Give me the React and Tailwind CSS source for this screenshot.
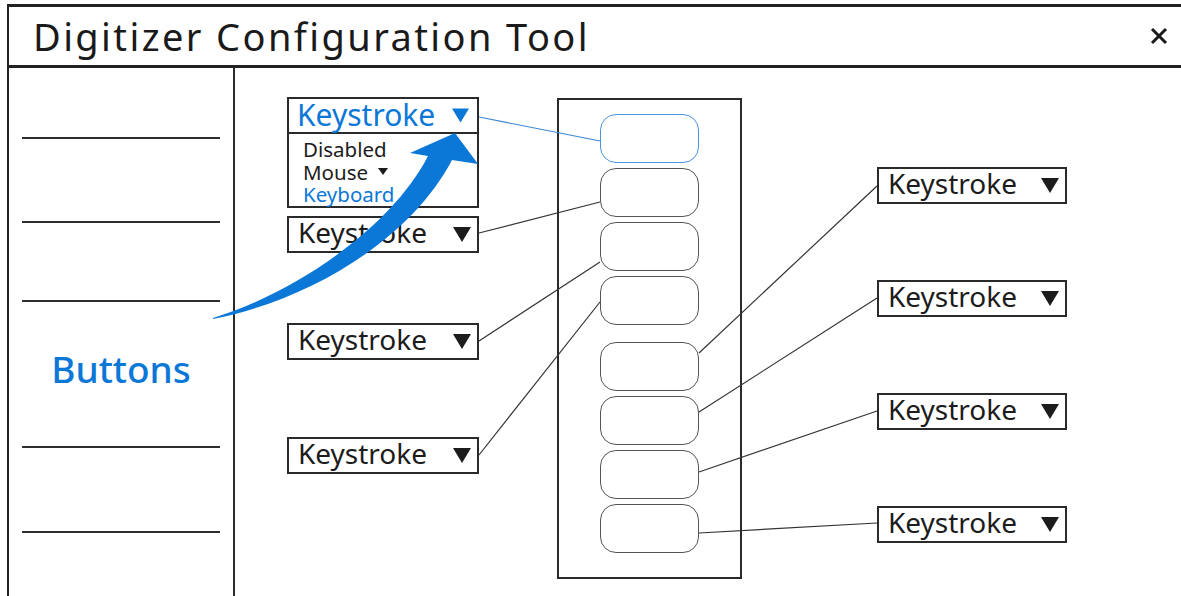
import React from 'react';

const font = { fontFamily: '"Noto Sans", "Liberation Sans", sans-serif' };

function Triangle({ className })
{
    return (
        <svg className={className} viewBox="0 0 18 15">
            <path d="M0 0H18L9 15Z" fill="currentColor" />
        </svg>
    );
}

function Dropdown({ className = '' })
{
    return (
        <div className={`flex h-[37px] items-center justify-between border-2 border-[#2a2a2a] bg-white pl-[9px] pr-[6px] ${className}`}>
            <span className="pb-[6px] text-[28px] leading-none text-[#1c1c1c]">Keystroke</span>
            <Triangle className="h-[15px] w-[18px] text-[#1c1c1c]" />
        </div>
    );
}

function OpenDropdown()
{
    return (
        <div className="h-[111px] border-2 border-[#2a2a2a] bg-white">
            <div className="flex h-[35px] items-center justify-between border-b-2 border-[#2a2a2a] pl-[8px] pr-[8px]">
                <span className="pb-[1px] text-[30px] leading-none text-[#0b78d8]">Keystroke</span>
                <Triangle className="h-[15px] w-[17px] text-[#0b78d8]" />
            </div>
            <div className="flex flex-col pl-[14px] pt-[4px] text-[20.5px] leading-[22.5px]">
                <span className="text-[#1c1c1c]">Disabled</span>
                <span className="flex items-center text-[#1c1c1c]">
                    Mouse
                    <svg className="ml-[10px] h-[7px] w-[10px]" viewBox="0 0 10 7">
                        <path d="M0 0H10L5 7Z" fill="#1c1c1c" />
                    </svg>
                </span>
                <span className="text-[#0b78d8]">Keyboard</span>
            </div>
        </div>
    );
}

function Key({ blue })
{
    return (
        <div className={`h-[49px] w-[99px] rounded-[16px] border-[1.5px] ${blue ? 'border-[#4a94e0]' : 'border-[#555]'}`} />
    );
}

function Rule({ className = '' })
{
    return <div className={`h-[2px] bg-[#2e2e2e] ${className}`} />;
}

export default function App()
{
    const lines = [
        [479, 233, 600, 202],
        [479, 341, 600, 262],
        [479, 455, 600, 302],
        [699, 353, 877, 186],
        [699, 412, 877, 298],
        [699, 472, 877, 411],
        [699, 533, 877, 523],
    ];

    return (
        <div className="relative h-[596px] w-[1181px] overflow-hidden bg-white" style={font}>
            <div className="ml-[7px] mt-[4px] flex h-[640px] w-[1200px] flex-col border-l-2 border-t-[3px] border-[#222]">
                <header className="flex h-[61px] shrink-0 items-center border-b-[3px] border-[#222] pl-[24px] pr-[39px]">
                    <h1 className="text-[38px] leading-none tracking-[2.4px] text-[#1a1a1a]">Digitizer Configuration Tool</h1>
                    <svg className="ml-auto h-[18px] w-[18px]" viewBox="0 0 18 18">
                        <path d="M2 2L16 16M16 2L2 16" stroke="#1a1a1a" strokeWidth="3" />
                    </svg>
                </header>

                <div className="flex flex-1">
                    <aside className="flex w-[226px] shrink-0 flex-col border-r-2 border-[#2a2a2a] px-[13px]">
                        <Rule className="mt-[69px]" />
                        <Rule className="mt-[82px]" />
                        <Rule className="mt-[77px]" />
                        <div className="flex h-[144px] items-center justify-center pb-[12px]">
                            <span className="text-[37px] font-medium leading-none text-[#0b78d8]">Buttons</span>
                        </div>
                        <Rule />
                        <Rule className="mt-[83px]" />
                    </aside>

                    <main className="flex flex-1 items-start pl-[52px]">
                        <div className="mt-[29px] flex w-[192px] flex-col">
                            <OpenDropdown />
                            <Dropdown className="mt-[8px]" />
                            <Dropdown className="mt-[70px]" />
                            <Dropdown className="mt-[77px]" />
                        </div>

                        <div className="ml-[78px] mt-[30px] flex h-[481px] w-[185px] flex-col items-center border-2 border-[#2a2a2a] pt-[14px]">
                            <div className="flex flex-col gap-[5px]">
                                <Key blue />
                                <Key />
                                <Key />
                                <Key />
                            </div>
                            <div className="mt-[17px] flex flex-col gap-[5px]">
                                <Key />
                                <Key />
                                <Key />
                                <Key />
                            </div>
                        </div>

                        <div className="ml-[135px] mt-[99px] flex w-[190px] flex-col gap-[76px]">
                            <Dropdown />
                            <Dropdown />
                            <Dropdown />
                            <Dropdown />
                        </div>
                    </main>
                </div>
            </div>

            {/* connectors and the big arrow, drawn over the layout */}
            <svg className="pointer-events-none absolute left-0 top-0" width="1181" height="596" viewBox="0 0 1181 596">
                <line x1="479" y1="117" x2="600" y2="141" stroke="#3a86d8" strokeWidth="1.2" />
                {lines.map(([x1, y1, x2, y2], i) => (
                    <line key={i} x1={x1} y1={y1} x2={x2} y2={y2} stroke="#333" strokeWidth="1.2" />
                ))}
                <path
                    d="M213 318C290 295 390 230 428 156L410 153L455 133L478 164L452 160C410 240 310 300 213 319Z"
                    fill="#0b78d8"
                />
            </svg>
        </div>
    );
}
